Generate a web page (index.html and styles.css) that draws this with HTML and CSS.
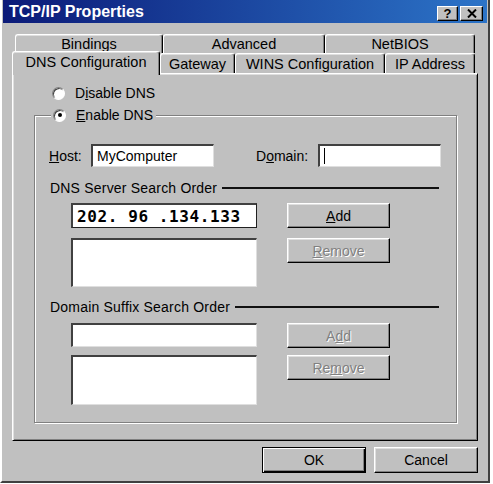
FILE: index.html
```html
<!DOCTYPE html>
<html lang="en">
<head>
    <meta charset="UTF-8">
    <title>TCP/IP Properties</title>
    <link rel="stylesheet" href="styles.css">
</head>
<body>
    <div class="window">
        <div class="titlebar">
            <span class="title">TCP/IP Properties</span>
            <div class="title-buttons">
                <span class="title-button">?</span>
                <span class="title-button">
                    <svg width="10" height="9" viewBox="0 0 10 9"><path d="M1 0.5 L9 8.5 M9 0.5 L1 8.5" stroke="#000" stroke-width="2"/></svg>
                </span>
            </div>
        </div>
        <div class="content">
            <div class="tabs">
                <div class="tab-row tab-row-back">
                    <div class="tab tab-bindings">Bindings</div>
                    <div class="tab tab-advanced">Advanced</div>
                    <div class="tab tab-netbios">NetBIOS</div>
                </div>
                <div class="tab-row tab-row-front">
                    <div class="tab tab-dns active">DNS Configuration</div>
                    <div class="tab tab-gateway">Gateway</div>
                    <div class="tab tab-wins">WINS Configuration</div>
                    <div class="tab tab-ip">IP Address</div>
                </div>
            </div>
            <div class="panel">
                <div class="option option-disable"><span class="radio"></span><span>D<u>i</u>sable DNS</span></div>
                <fieldset class="group">
                    <legend class="option"><span class="radio checked"></span><span><u>E</u>nable DNS</span></legend>
                    <div class="host-row">
                        <span class="field-label host-label"><u>H</u>ost:</span>
                        <div class="field text-field">MyComputer</div>
                        <span class="field-label domain-label">D<u>o</u>main:</span>
                        <div class="field text-field"><span class="caret"></span></div>
                    </div>

                    <div class="section-head"><span>DNS Server Search Order</span><span class="rule"></span></div>
                    <div class="list-row">
                        <div class="field ip-field">202. 96 .134.133</div>
                        <button class="btn"><u>A</u>dd</button>
                    </div>
                    <div class="list-row list-row-second">
                        <div class="field listbox"></div>
                        <button class="btn" disabled><u>R</u>emove</button>
                    </div>

                    <div class="section-head section-head-suffix"><span>Domain Suffix Search Order</span><span class="rule"></span></div>
                    <div class="list-row list-row-suffix">
                        <div class="field entry-field"></div>
                        <button class="btn" disabled>A<u>d</u>d</button>
                    </div>
                    <div class="list-row list-row-suffix-second">
                        <div class="field listbox listbox-suffix"></div>
                        <button class="btn" disabled>Re<u>m</u>ove</button>
                    </div>
                </fieldset>
            </div>
            <div class="footer">
                <button class="btn btn-dialog btn-default">OK</button>
                <button class="btn btn-dialog">Cancel</button>
            </div>
        </div>
    </div>
</body>
</html>
```

FILE: styles.css
```css
body {
    margin: 0;
    background: #ffffff;
    font-family: "Liberation Sans", Arial, sans-serif;
    font-size: 14px;
    color: #000;
}

.window {
    box-sizing: border-box;
    width: 490px;
    height: 483px;
    background: #c0c0c0;
    border-left: 2px solid #fff;
    border-right: 2px solid #404040;
    border-bottom: 2px solid #404040;
}

/* title bar */
.titlebar {
    display: flex;
    align-items: center;
    justify-content: space-between;
    height: 23px;
    margin: 0 1px;
    padding: 0 4px 0 6px;
    background: linear-gradient(to right, #0b1a78, #2c74c8);
}
.title {
    color: #fff;
    font-weight: bold;
    font-size: 16px;
}
.title-buttons {
    display: flex;
    gap: 2px;
    margin-top: 3px;
}
.title-button {
    box-sizing: border-box;
    display: flex;
    align-items: center;
    justify-content: center;
    width: 21px;
    height: 15px;
    background: #c0c0c0;
    border-top: 1px solid #fff;
    border-left: 1px solid #fff;
    border-right: 1px solid #000;
    border-bottom: 1px solid #000;
    box-shadow: inset -1px -1px 0 #808080;
    font-weight: bold;
    font-size: 13px;
    line-height: 1;
}
.title-button + .title-button {
    width: 23px;
}

.content {
    padding: 11px 10px 0;
}

/* tabs */
.tab-row {
    display: flex;
    font-size: 14.5px;
}
.tab-row-back {
    height: 19px;
    margin-left: 3px;
}
.tab-row-front {
    height: 20px;
}
.tab {
    box-sizing: border-box;
    display: flex;
    align-items: center;
    justify-content: center;
    background: #c0c0c0;
    border-top: 1px solid #fff;
    border-left: 1px solid #fff;
    border-right: 1px solid #000;
    border-radius: 3px 3px 0 0;
    box-shadow: inset -1px 0 0 #808080, inset 0 1px 0 #dfdfdf;
}
.tab-bindings { width: 148px; }
.tab-advanced { width: 162px; }
.tab-netbios { width: 150px; }
.tab-dns { width: 148px; }
.tab-gateway { width: 75px; }
.tab-wins { width: 150px; }
.tab-ip { width: 90px; }
.tab.active {
    position: relative;
    z-index: 1;
    height: 24px;
    margin-top: -2px;
    margin-bottom: -2px;
    padding-bottom: 4px;
}

/* panel */
.panel {
    box-sizing: border-box;
    height: 368px;
    border-top: 1px solid #fff;
    border-left: 1px solid #fff;
    border-right: 1px solid #000;
    border-bottom: 1px solid #000;
    box-shadow: inset 1px 1px 0 #dfdfdf, inset -1px -1px 0 #808080;
}

.option {
    display: flex;
    align-items: center;
    height: 16px;
}
.option-disable {
    margin: 11px 0 0 39px;
}
.radio {
    box-sizing: border-box;
    display: inline-flex;
    align-items: center;
    justify-content: center;
    width: 13px;
    height: 13px;
    margin-right: 10px;
    border-radius: 50%;
    background: #fff;
    border: 1px solid;
    border-color: #808080 #fff #fff #808080;
    box-shadow: inset 1px 1px 0 #404040;
}
.radio.checked::after {
    content: "";
    width: 4px;
    height: 4px;
    border-radius: 50%;
    background: #000;
}

.group {
    margin: 6px 20px 0 21px;
    padding: 0 0 17px;
    border: 1px solid #808080;
    box-shadow: inset 1px 1px 0 #fff, 1px 1px 0 #fff;
}
.group > legend {
    margin-left: 16px;
    padding: 0 3px 0 2px;
    background: #c0c0c0;
}

.host-row {
    display: flex;
    align-items: center;
    margin-top: 21px;
    padding-left: 14px;
}
.host-label { width: 42px; }
.domain-label {
    width: 62px;
    margin-left: 42px;
}

.field {
    box-sizing: border-box;
    background: #fff;
    border-top: 2px solid #404040;
    border-left: 2px solid #404040;
    border-right: 1px solid #dfdfdf;
    border-bottom: 1px solid #dfdfdf;
}
.text-field {
    display: flex;
    align-items: center;
    width: 123px;
    height: 23px;
    padding-left: 4px;
}
.caret {
    width: 1px;
    height: 16px;
    background: #000;
}

.section-head {
    display: flex;
    align-items: center;
    height: 16px;
    margin: 13px 17px 0 15px;
    letter-spacing: 0.2px;
}
.section-head-suffix {
    margin-top: 12px;
}
.rule {
    flex: 1;
    height: 2px;
    margin-left: 5px;
    background: #111;
}

.list-row {
    display: flex;
    align-items: flex-start;
    margin-top: 7px;
    padding-left: 36px;
}
.list-row-second { margin-top: 10px; }
.list-row-suffix { margin-top: 8px; }
.list-row-suffix-second { margin-top: 7px; }

.ip-field {
    display: flex;
    align-items: center;
    width: 186px;
    height: 25px;
    padding-left: 4px;
    border-right: 1px solid #202020;
    border-bottom: 1px solid #202020;
    font-family: "DejaVu Sans Mono", monospace;
    font-weight: bold;
    font-size: 16px;
    letter-spacing: 0.6px;
}
.entry-field {
    width: 186px;
    height: 24px;
}
.listbox {
    width: 186px;
    height: 49px;
}
.listbox-suffix {
    height: 50px;
}

/* buttons */
.btn {
    box-sizing: border-box;
    width: 103px;
    height: 25px;
    margin-left: 30px;
    padding: 0;
    font-family: "Liberation Sans", Arial, sans-serif;
    font-size: 14px;
    color: #000;
    background: #c0c0c0;
    border-top: 1px solid #fff;
    border-left: 1px solid #fff;
    border-right: 1px solid #000;
    border-bottom: 1px solid #000;
    border-radius: 0;
    box-shadow: inset -1px -1px 0 #808080, inset 1px 1px 0 #dfdfdf;
}
.btn:disabled {
    color: #808080;
    text-shadow: 1px 1px 0 #fff;
}

.footer {
    display: flex;
    justify-content: flex-end;
    gap: 8px;
    margin-top: 6px;
}
.btn-dialog {
    width: 104px;
    height: 26px;
    margin: 0;
}
.btn-default {
    border: 1px solid #000;
    box-shadow: inset 1px 1px 0 #fff, inset -1px -1px 0 #000, inset -2px -2px 0 #808080;
}
```
